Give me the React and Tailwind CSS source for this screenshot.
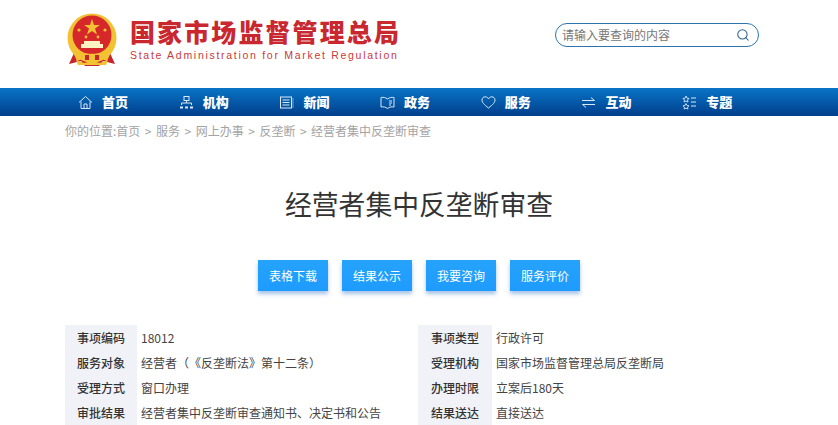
import { Search } from "lucide-react";

const iconProps = {
  width: 15,
  height: 15,
  viewBox: "0 0 15 15",
  fill: "none",
  stroke: "#dbe8f5",
  strokeWidth: 1,
};

const HomeIcon = () => (
  <svg {...iconProps}>
    <path d="M1 7.5 L7.5 1.5 L14 7.5" />
    <path d="M3 6.5 V13.5 H12 V6.5" />
    <path d="M6 13.5 V9 H9 V13.5" />
  </svg>
);

const OrgIcon = () => (
  <svg {...iconProps}>
    <rect x="5" y="1.5" width="5" height="4" />
    <path d="M7.5 5.5 V8 M2.5 10 V8 H12.5 V10" />
    <path d="M1 12.5 H4 M6 12.5 H9 M11 12.5 H14" strokeWidth="2.2" />
  </svg>
);

const NewsIcon = () => (
  <svg {...iconProps}>
    <rect x="1.5" y="2" width="11" height="11" />
    <path d="M3.5 5 H10.5 M3.5 7.5 H10.5 M3.5 10 H10.5" />
    <path d="M14 3 V13" strokeOpacity="0.5" />
  </svg>
);

const GovIcon = () => (
  <svg {...iconProps}>
    <path d="M1 2.5 C3.5 2 5.5 2.5 7.5 4 C9.5 2.5 11.5 2 14 2.5 V12 C11.5 11.5 9.5 12 7.5 13.5 C5.5 12 3.5 11.5 1 12 Z" />
    <path d="M9 6 H12 M9 8 H12 M9 10 H11" />
  </svg>
);

const HeartIcon = () => (
  <svg {...iconProps}>
    <path d="M7.5 13 C3 9.5 1 7.5 1 5 C1 3 2.5 1.8 4.2 1.8 C5.6 1.8 6.8 2.6 7.5 3.8 C8.2 2.6 9.4 1.8 10.8 1.8 C12.5 1.8 14 3 14 5 C14 7.5 12 9.5 7.5 13 Z" />
  </svg>
);

const SwapIcon = () => (
  <svg {...iconProps}>
    <path d="M1 5.5 H13.5 L10 2.5" />
    <path d="M14 9.5 H1.5 L5 12.5" />
  </svg>
);

const TopicIcon = () => (
  <svg {...iconProps}>
    <path d="M4 1 L5 3.2 L7 3.5 L5.5 5 L6 7 L4 6 L2 7 L2.5 5 L1 3.5 L3 3.2 Z" strokeWidth="0.9" />
    <path d="M4 8.5 L5 10.5 L7 10.8 L5.5 12.2 L6 14 L4 13.2 L2 14 L2.5 12.2 L1 10.8 L3 10.5 Z" strokeWidth="0.9" />
    <path d="M9 3 H14 M9 7 H14 M9 11 H14" />
  </svg>
);

const navItems = [
  { label: "首页", Icon: HomeIcon },
  { label: "机构", Icon: OrgIcon },
  { label: "新闻", Icon: NewsIcon },
  { label: "政务", Icon: GovIcon },
  { label: "服务", Icon: HeartIcon },
  { label: "互动", Icon: SwapIcon },
  { label: "专题", Icon: TopicIcon },
];

const crumbs = ["服务", "网上办事", "反垄断", "经营者集中反垄断审查"];
const buttons = ["表格下载", "结果公示", "我要咨询", "服务评价"];

const rows = [
  ["事项编码", "18012", "事项类型", "行政许可"],
  ["服务对象", "经营者（《反垄断法》第十二条）", "受理机构", "国家市场监督管理总局反垄断局"],
  ["受理方式", "窗口办理", "办理时限", "立案后180天"],
  ["审批结果", "经营者集中反垄断审查通知书、决定书和公告", "结果送达", "直接送达"],
];

const Emblem = () => (
  <svg width="50" height="54" viewBox="0 0 50 54">
    <path d="M7 40 L2 51 L14 48 L18 53 L32 53 L36 48 L48 51 L43 40 Z" fill="#c8242c" />
    <circle cx="25" cy="25" r="24.5" fill="#f3c233" />
    <circle cx="25" cy="22" r="19.5" fill="#d6282b" />
    <path d="M25 6 l2 6 h6 l-5 3.6 2 6 -5-3.7 -5 3.7 2-6 -5-3.6 h6 Z" fill="#f3c233" />
    <circle cx="12" cy="17" r="1.6" fill="#f3c233" />
    <circle cx="38" cy="17" r="1.6" fill="#f3c233" />
    <circle cx="19" cy="24" r="1.4" fill="#f3c233" />
    <circle cx="31" cy="24" r="1.4" fill="#f3c233" />
    <path d="M14 35 h22 v-4 h-3 v-3 h-16 v3 h-3 Z" fill="#fff3c4" />
    <path d="M5 37 C12 42 38 42 45 37 L40 48 C32 44 18 44 10 48 Z" fill="#f3c233" />
    <path d="M18 42 h4 v5 h-4 Z M28 42 h4 v5 h-4 Z" fill="#c8242c" />
    <path d="M9 47 L17 50 L25 48 L33 50 L41 47 L39 52 L11 52 Z" fill="#f3c233" />
  </svg>
);

export default function App() {
  return (
    <div className="h-[425px] w-[838px] overflow-hidden bg-white font-['Noto_Sans_CJK_SC','Liberation_Sans',sans-serif] [text-spacing-trim:space-all]">
      {/* Header */}
      <header className="flex h-[88px] items-start">
        <div className="ml-[67px] mt-[13px]">
          <Emblem />
        </div>
        <div className="ml-[13px] mt-[13px] w-[270px]">
          <div className="whitespace-nowrap text-[25px] leading-[36px] font-black tracking-[2.1px] text-[#c9282f]">
            国家市场监督管理总局
          </div>
          <div className="whitespace-nowrap font-['Liberation_Sans',sans-serif] text-[10.5px] leading-[12px] tracking-[1.71px] text-[#c9383c]">
            State Administration for Market Regulation
          </div>
        </div>
        <div className="ml-[155px] mt-[23px] flex h-[24px] w-[204px] items-center justify-between rounded-full border border-[#2b74ad] pl-[6px] pr-[8px]">
          <span className="text-[12px] text-[#777]">请输入要查询的内容</span>
          <Search size={14} strokeWidth={1.8} className="text-[#2f5f94]" />
        </div>
      </header>

      {/* Nav */}
      <nav className="flex h-[28px] items-center bg-gradient-to-b from-[#0b74c6] to-[#023f8c] pl-[78px]">
        {navItems.map(({ label, Icon }) => (
          <div key={label} className="flex w-[100.7px] items-center gap-[9px]">
            <Icon />
            <span className="text-[13px] font-black text-white">{label}</span>
          </div>
        ))}
      </nav>

      {/* Breadcrumb */}
      <div className="ml-[65px] mt-[6px] flex h-[18px] items-center text-[12px] whitespace-nowrap text-[#a3a3a3]">
        <span>你的位置:首页</span>
        {crumbs.map((c) => (
          <span key={c}>
            <span className="mx-[4.5px]">&gt;</span>
            {c}
          </span>
        ))}
      </div>

      <h1 className="mt-[44px] text-center text-[26.8px] leading-[40px] font-normal text-[#333]">
        经营者集中反垄断审查
      </h1>

      {/* Action buttons */}
      <div className="mt-[36px] flex justify-center gap-[14px]">
        {buttons.map((b) => (
          <button
            key={b}
            className="h-[31px] w-[70px] bg-gradient-to-b from-[#25a3fb] to-[#1e9bff] text-[12px] text-white shadow-[0_3px_4px_rgba(60,120,200,0.45)]"
          >
            {b}
          </button>
        ))}
      </div>

      {/* Info table */}
      <div className="ml-[65px] mt-[34px] w-[700px] text-[12px]">
        {rows.map(([l1, v1, l2, v2]) => (
          <div key={l1} className="flex h-[25px] items-center">
            <div className="flex h-full w-[72px] items-center justify-center bg-[#f0f2f8] font-medium text-[#333]">{l1}</div>
            <div className="ml-[4px] w-[277px] whitespace-nowrap text-[#444]">{v1}</div>
            <div className="flex h-full w-[74px] items-center justify-center bg-[#f0f2f8] font-medium text-[#333]">{l2}</div>
            <div className="ml-[4px] whitespace-nowrap text-[#444]">{v2}</div>
          </div>
        ))}
      </div>
    </div>
  );
}
